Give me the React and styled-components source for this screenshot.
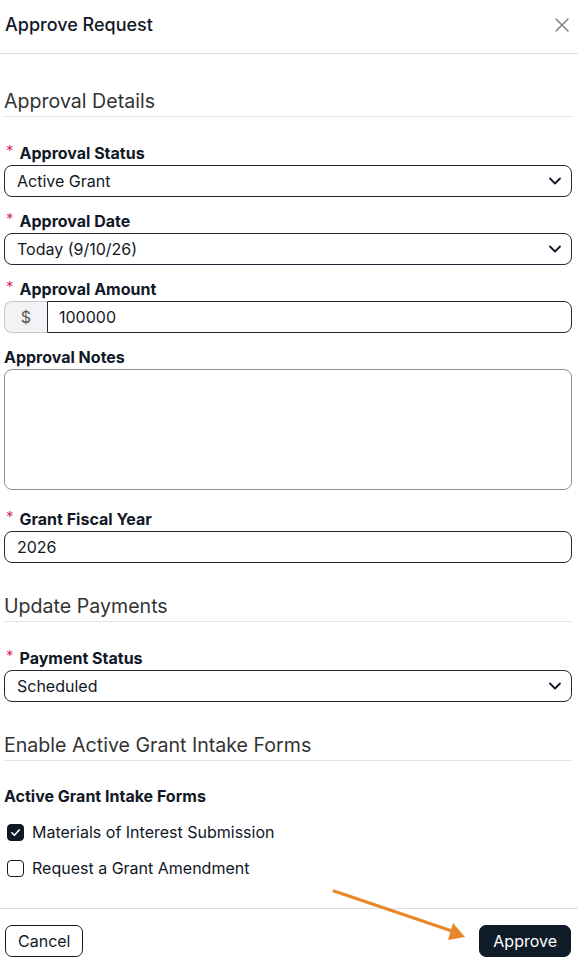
import React from "react";
import styled, { createGlobalStyle } from "styled-components";

const GlobalStyle = createGlobalStyle`
  html, body {
    margin: 0;
    padding: 0;
    background: #ffffff;
  }
  body {
    font-family: Inter, "Noto Sans", "Liberation Sans", sans-serif;
    color: #111827;
  }
`;

const Modal = styled.div`
  position: relative;
  width: 578px;
  height: 966px;
  background: #fff;
  overflow: hidden;
`;

const Header = styled.header`
  display: flex;
  justify-content: space-between;
  align-items: center;
  height: 54px;
  padding: 0 8px 0 5px;
  box-sizing: border-box;
  border-bottom: 1px solid #dedede;
`;

const Title = styled.h2`
  margin: 0;
  font-size: 18px;
  font-weight: 500;
  color: #111827;
  padding-bottom: 4px;
`;

const CloseButton = styled.button`
  border: 0;
  background: none;
  padding: 0;
  display: flex;
  color: #7b8189;
  margin-bottom: 4px;
`;

const Body = styled.div`
  padding: 0 6px 0 4px;
`;

const SectionTitle = styled.h3`
  margin: ${(p) => p.$top}px 0 0;
  font-size: 19.6px;
  line-height: 24px;
  font-weight: 400;
  color: #333;
  padding-bottom: 3px;
  border-bottom: 1px solid #e3e3e3;
`;

const Field = styled.div`
  margin-top: ${(p) => p.$top}px;
`;

const Label = styled.label`
  display: flex;
  align-items: center;
  gap: 6px;
  font-size: 16px;
  line-height: 20px;
  font-weight: 700;
  color: #111827;
  margin-bottom: 2px;
  padding-left: ${(p) => (p.$required ? 2 : 0)}px;
`;

const Star = styled.span`
  color: #d6336c;
  font-weight: 400;
  font-size: 15px;
  position: relative;
  top: -2px;
`;

const Select = styled.div`
  display: flex;
  align-items: center;
  justify-content: space-between;
  height: 32px;
  box-sizing: border-box;
  border: 1px solid #1f2937;
  border-radius: 8px;
  padding: 0 9px 0 12px;
  font-size: 16px;
  color: #111827;
`;

const InputGroup = styled.div`
  display: flex;
  height: 32px;
`;

const Addon = styled.span`
  display: flex;
  align-items: center;
  justify-content: center;
  width: 43px;
  box-sizing: border-box;
  background: #f1f3f5;
  border: 1px solid #c4c8cd;
  border-right: 0;
  border-radius: 8px 0 0 8px;
  font-size: 16px;
  color: #555;
`;

const Input = styled.div`
  flex: 1;
  display: flex;
  align-items: center;
  box-sizing: border-box;
  height: 32px;
  border: 1px solid #1f2937;
  border-radius: ${(p) => (p.$attached ? "0 8px 8px 0" : "8px")};
  padding-left: ${(p) => (p.$attached ? 11 : 12)}px;
  font-size: 16px;
  color: #111827;
`;

const TextArea = styled.div`
  height: 121px;
  box-sizing: border-box;
  border: 1px solid #8c9198;
  border-radius: 8px;
`;

const CheckList = styled.div`
  margin-top: 8px;
`;

const CheckRow = styled.label`
  display: flex;
  align-items: center;
  gap: 8px;
  height: 36px;
  padding-left: 3px;
  font-size: 16px;
  color: #111827;
`;

const Box = styled.span`
  width: 17px;
  height: 17px;
  box-sizing: border-box;
  border-radius: 4px;
  border: 1px solid #111827;
  background: ${(p) => (p.$checked ? "#111827" : "#fff")};
  display: flex;
  align-items: center;
  justify-content: center;
`;

const Footer = styled.footer`
  position: absolute;
  left: 0;
  right: 0;
  top: 908px;
  border-top: 1px solid #dedede;
  display: flex;
  justify-content: space-between;
  padding: 16px 7px 0 5px;
`;

const Button = styled.button`
  height: 32px;
  box-sizing: border-box;
  border-radius: 7px;
  font-family: inherit;
  font-size: 16px;
  padding: 0 ${(p) => (p.$primary ? 13 : 12)}px;
  border: 1px solid #111827;
  background: ${(p) => (p.$primary ? "#0f1b29" : "#fff")};
  color: ${(p) => (p.$primary ? "#fff" : "#111827")};
`;

const Arrow = styled.svg`
  position: absolute;
  left: 0;
  top: 0;
  pointer-events: none;
`;

const Chevron = () => (
  <svg width="14" height="14" viewBox="0 0 14 14" fill="none">
    <path d="M2 4.5 L7 9.5 L12 4.5" stroke="#111827" strokeWidth="1.8" strokeLinecap="round" strokeLinejoin="round" />
  </svg>
);

const Req = ({ children }) => (
  <Label $required>
    <Star>*</Star>
    {children}
  </Label>
);

export default function App() {
  return (
    <>
      <GlobalStyle />
      <Modal>
        <Header>
          <Title>Approve Request</Title>
          <CloseButton aria-label="close">
            <svg width="16" height="16" viewBox="0 0 16 16" fill="none">
              <path d="M2 2 L14 14 M14 2 L2 14" stroke="currentColor" strokeWidth="1.5" strokeLinecap="round" />
            </svg>
          </CloseButton>
        </Header>

        <Body>
          <SectionTitle $top={35}>Approval Details</SectionTitle>

          <Field $top={26}>
            <Req>Approval Status</Req>
            <Select>
              Active Grant
              <Chevron />
            </Select>
          </Field>

          <Field $top={14}>
            <Req>Approval Date</Req>
            <Select>
              Today (9/10/26)
              <Chevron />
            </Select>
          </Field>

          <Field $top={14}>
            <Req>Approval Amount</Req>
            <InputGroup>
              <Addon>$</Addon>
              <Input $attached>100000</Input>
            </InputGroup>
          </Field>

          <Field $top={14}>
            <Label>Approval Notes</Label>
            <TextArea />
          </Field>

          <Field $top={19}>
            <Req>Grant Fiscal Year</Req>
            <Input>2026</Input>
          </Field>

          <SectionTitle $top={31}>Update Payments</SectionTitle>

          <Field $top={26}>
            <Req>Payment Status</Req>
            <Select>
              Scheduled
              <Chevron />
            </Select>
          </Field>

          <SectionTitle $top={31}>Enable Active Grant Intake Forms</SectionTitle>

          <Field $top={25}>
            <Label>Active Grant Intake Forms</Label>
            <CheckList>
              <CheckRow>
                <Box $checked>
                  <svg width="11" height="11" viewBox="0 0 12 12" fill="none">
                    <path d="M2 6.3 L4.8 9 L10 3.2" stroke="#fff" strokeWidth="1.8" strokeLinecap="round" strokeLinejoin="round" />
                  </svg>
                </Box>
                Materials of Interest Submission
              </CheckRow>
              <CheckRow>
                <Box />
                Request a Grant Amendment
              </CheckRow>
            </CheckList>
          </Field>
        </Body>

        <Footer>
          <Button>Cancel</Button>
          <Button $primary>Approve</Button>
        </Footer>

        <Arrow width="578" height="966" viewBox="0 0 578 966">
          <line x1="334" y1="891" x2="452" y2="931" stroke="#e8862a" strokeWidth="3" strokeLinecap="round" />
          <polygon points="465,937 448,940 453,923" fill="#e8862a" />
        </Arrow>
      </Modal>
    </>
  );
}
